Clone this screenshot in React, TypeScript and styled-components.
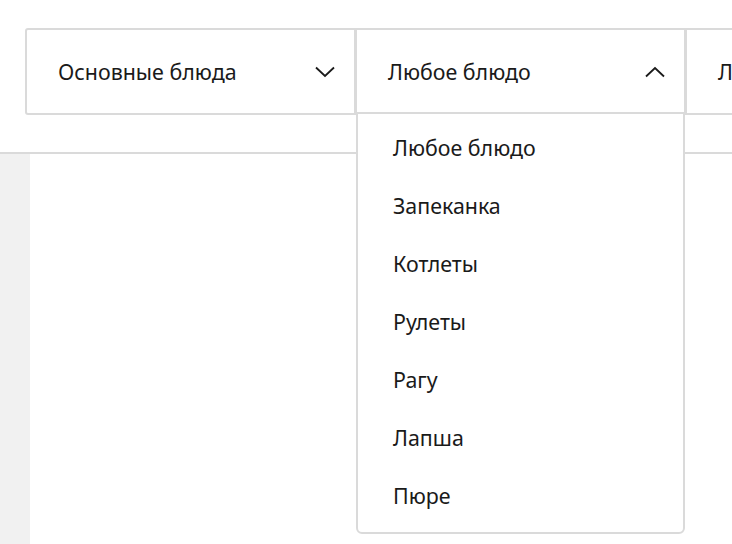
import React, { useState } from "react";
import styled, { createGlobalStyle } from "styled-components";

const GlobalStyle = createGlobalStyle`
  html, body {
    margin: 0;
    padding: 0;
    height: 100%;
    background: #fff;
    font-family: "Noto Sans", "Open Sans", Arial, sans-serif;
    color: #1a1a1a;
  }
  #root {
    height: 100%;
  }
`;

const Page = styled.div`
  display: flex;
  flex-direction: column;
  height: 100vh;
  overflow: hidden;
`;

const Header = styled.header`
  height: 152px;
  flex-shrink: 0;
  border-bottom: 2px solid #dadada;
  box-sizing: content-box;
`;

const FilterRow = styled.div`
  display: flex;
  padding: 28px 0 0 25px;
`;

const SelectBox = styled.div<{ $first?: boolean }>`
  position: relative;
  flex-shrink: 0;
  width: 331px;
  height: 87px;
  box-sizing: border-box;
  border: 2px solid #dadada;
  margin-left: ${p => (p.$first ? "0" : "-1px")};
  border-radius: ${p => (p.$first ? "3px 0 0 3px" : "0")};
  display: flex;
  align-items: center;
  justify-content: space-between;
  padding: 0 19px 0 31px;
  font-size: 21.4px;
  cursor: pointer;
  background: #fff;
`;

const Label = styled.span`
  white-space: nowrap;
`;

const Menu = styled.ul`
  position: absolute;
  top: 100%;
  left: -1px;
  right: -1px;
  margin: -1px 0 0;
  padding: 4px 0 8px;
  list-style: none;
  background: #fff;
  border: 2px solid #dadada;
  border-radius: 0 0 6px 6px;
  z-index: 10;
`;

const MenuItem = styled.li`
  height: 58px;
  display: flex;
  align-items: center;
  padding-left: 35px;
  font-size: 21.4px;
`;

const Body = styled.div`
  flex: 1;
  display: flex;
`;

const Rail = styled.div`
  width: 30px;
  background: #f1f1f1;
`;

const Content = styled.div`
  flex: 1;
`;

const Chevron = ({ up }: { up?: boolean }) => (
  <svg width="20" height="12" viewBox="0 0 20 12" fill="none">
    <path
      d={up ? "M1 10.5 L10 2 L19 10.5" : "M1 1.5 L10 10 L19 1.5"}
      stroke="#1a1a1a"
      strokeWidth="1.8"
    />
  </svg>
);

const dishes = [
  "Любое блюдо",
  "Запеканка",
  "Котлеты",
  "Рулеты",
  "Рагу",
  "Лапша",
  "Пюре"
];

export default function App() {
  const [open, setOpen] = useState(true);
  const [dish, setDish] = useState("Любое блюдо");
  return (
    <Page>
      <GlobalStyle />
      <Header>
        <FilterRow>
          <SelectBox $first>
            <Label>Основные блюда</Label>
            <Chevron />
          </SelectBox>
          <SelectBox onClick={() => setOpen(!open)}>
            <Label>{dish}</Label>
            <Chevron up={open} />
            {open ? (
              <Menu>
                {dishes.map(d => (
                  <MenuItem
                    key={d}
                    onClick={() => {
                      setDish(d);
                    }}
                  >
                    {d}
                  </MenuItem>
                ))}
              </Menu>
            ) : null}
          </SelectBox>
          <SelectBox>
            <Label>Любая кухня</Label>
            <Chevron />
          </SelectBox>
        </FilterRow>
      </Header>
      <Body>
        <Rail />
        <Content />
      </Body>
    </Page>
  );
}
